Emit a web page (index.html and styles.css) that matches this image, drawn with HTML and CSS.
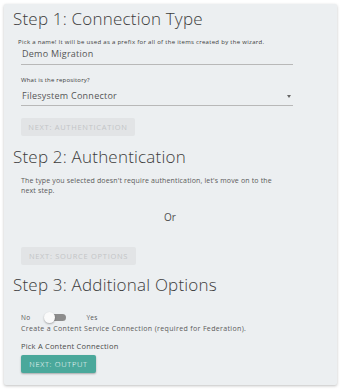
FILE: index.html
```html
<!DOCTYPE html>
<html lang="en">

<head>
    <meta charset="UTF-8">
    <meta name="viewport" content="width=device-width, initial-scale=1.0">
    <title>Migration Wizard</title>
    <link rel="stylesheet" href="styles.css">
</head>

<body>
    <main class="wizard">
        <!-- step 1 -->
        <h2 class="step-title">Step 1: Connection Type</h2>
        <div class="step-body">
            <div class="field">
                <label class="field-label field-label-shrunk">Pick a name! It will be used as a prefix for all of the items created by the wizard.</label>
                <div class="field-input">Demo Migration</div>
            </div>
            <div class="field field-select">
                <label class="field-label">What is the repository?</label>
                <div class="field-input">Filesystem Connector <span class="caret"></span></div>
            </div>
            <button class="btn btn-disabled btn-first">Next: Authentication</button>
        </div>

        <!-- step 2 -->
        <h2 class="step-title step-title-mid">Step 2: Authentication</h2>
        <div class="step-body">
            <p class="step-text">The type you selected doesn't require authentication, let's move on to the next step.</p>
            <p class="or">Or</p>
            <button class="btn btn-disabled btn-second">Next: Source Options</button>
        </div>

        <!-- step 3 -->
        <h2 class="step-title step-title-last">Step 3: Additional Options</h2>
        <div class="step-body">
            <div class="switch-row">
                <span class="switch-text">No</span>
                <span class="switch"><span class="switch-knob"></span></span>
                <span class="switch-text">Yes</span>
            </div>
            <p class="step-text switch-help">Create a Content Service Connection (required for Federation).</p>
            <p class="pick-label">Pick A Content Connection</p>
            <button class="btn btn-primary">Next: Output</button>
        </div>
    </main>
</body>

</html>
```

FILE: styles.css
```css
* {
    margin: 0;
    padding: 0;
    box-sizing: border-box;
}

body {
    padding: 4px;
    background: #fff;
    font-family: "Open Sans", sans-serif;
    color: #5a5a5a;
}

.wizard {
    width: 333px;
    height: 381px;
    padding: 4px 9px 11px;
    background: #eceff1;
    border-radius: 2px;
    box-shadow: 0 1px 3px rgba(0, 0, 0, 0.25);
}

.step-title {
    font-size: 17px;
    line-height: 22px;
    font-weight: 300;
    color: #3c3c3c;
    letter-spacing: 0.2px;
}

.step-title-mid {
    margin-top: 10px;
}

.step-title-last {
    margin-top: 9px;
}

.step-body {
    padding-left: 8px;
}

.field {
    width: 272px;
    margin-top: 8px;
}

.field-select {
    margin-top: 11px;
}

.field-label {
    display: block;
    font-size: 6px;
    line-height: 8px;
    letter-spacing: 0.2px;
    color: #3a3a3a;
}

.field-label-shrunk {
    margin-left: -3px;
    letter-spacing: 0.3px;
}

.field-input {
    position: relative;
    padding: 1px 1px 3px;
    font-size: 9px;
    line-height: 14px;
    letter-spacing: 0.25px;
    color: #555;
    border-bottom: 1px solid #b8b8b8;
}

.field-select .field-input {
    margin-top: 5px;
    padding: 0 1px 2px;
}

.caret {
    position: absolute;
    right: 2px;
    top: 6px;
    border-left: 2.5px solid transparent;
    border-right: 2.5px solid transparent;
    border-top: 3px solid #666;
}

.btn {
    display: block;
    height: 18px;
    padding: 0;
    border: 0;
    border-radius: 2px;
    font-family: inherit;
    font-size: 7.5px;
    letter-spacing: 0.7px;
    text-transform: uppercase;
}

.btn-disabled {
    background: #e2e4e6;
    color: #c3c5c7;
}

.btn-first {
    width: 114px;
    margin-top: 12px;
}

.btn-second {
    width: 115px;
    margin-top: 23px;
}

.btn-primary {
    width: 75px;
    margin-top: 4px;
    background: #4aa89b;
    color: #fff;
    font-weight: 300;
    box-shadow: 0 1px 2px rgba(0, 0, 0, 0.3);
}

.step-text {
    width: 262px;
    margin-top: 8px;
    font-size: 7px;
    line-height: 10px;
    letter-spacing: 0.15px;
}

.or {
    margin-top: 14px;
    padding-right: 9px;
    text-align: center;
    font-size: 10px;
    line-height: 14px;
    color: #505050;
}

.switch-row {
    display: flex;
    align-items: center;
    margin-top: 15px;
    height: 12px;
    font-size: 6.5px;
    letter-spacing: 0.3px;
}

.switch-text {
    flex: none;
}

.switch {
    flex: none;
    position: relative;
    width: 19px;
    height: 7px;
    margin: 0 20px 0 17px;
    background: #8c8c8c;
    border-radius: 4px;
}

.switch-knob {
    position: absolute;
    left: -3px;
    top: -2px;
    width: 11px;
    height: 11px;
    background: #fafafa;
    border-radius: 50%;
    box-shadow: 0 1px 2px rgba(0, 0, 0, 0.3);
}

.switch-help {
    width: auto;
    margin-top: 1px;
    letter-spacing: 0.35px;
}

.pick-label {
    margin-top: 7px;
    font-size: 7.5px;
    line-height: 10px;
    letter-spacing: 0.2px;
    color: #4a4a4a;
}
```
